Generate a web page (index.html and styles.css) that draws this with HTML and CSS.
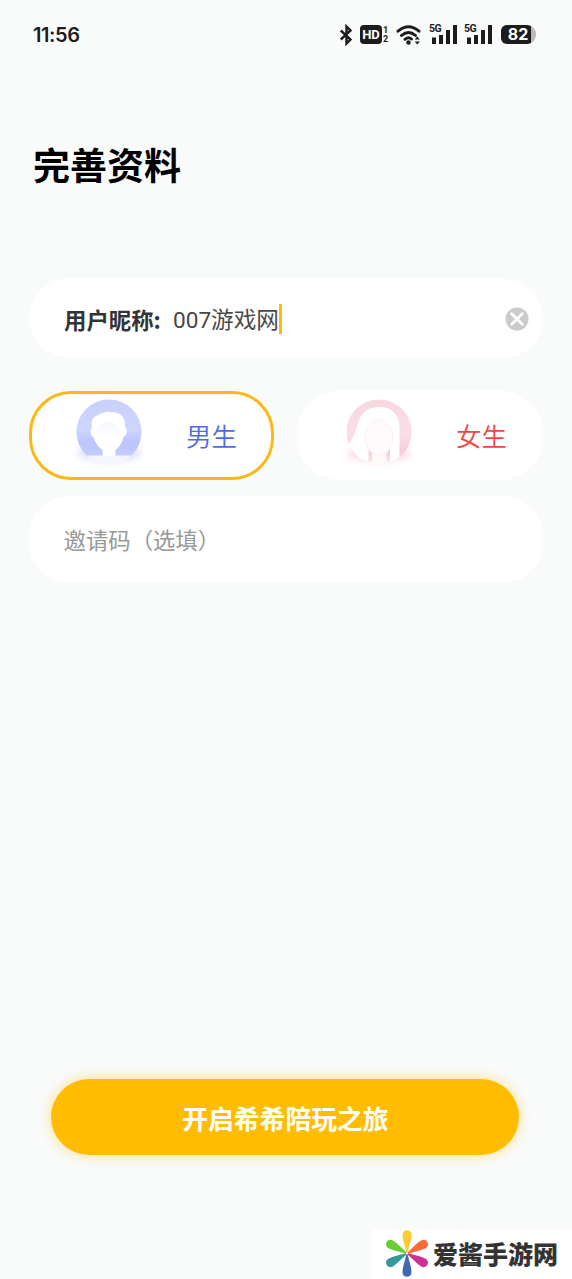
FILE: index.html
```html
<!DOCTYPE html>
<html lang="zh-CN">
<head>
<meta charset="utf-8">
<title>完善资料</title>
<link rel="stylesheet" href="styles.css">
</head>
<body>
<div class="screen">
  <header class="status">
    <span class="time">11:56</span>
    <div class="status-icons">
      <svg class="bluetooth" width="14" height="22" viewBox="0 0 14 22"><path d="M1.800 6.500 11.500 15.500 7.500 19.500V2.500l4 4L1.800 15.500" fill="none" stroke="#1c1c1c" stroke-width="2.400"/></svg>
      <span class="hd">HD</span>
      <span class="sim"><span>1</span><span>2</span></span>
      <svg class="wifi" width="26" height="22" viewBox="0 0 26 22"><g fill="none" stroke="#1c1c1c" stroke-width="2.900" stroke-linecap="round"><path d="M2 7.200Q12.500-1.500 23 7.200M5.500 11.500Q12.500 5.500 19.500 11.500M9 15.300Q12.500 12.500 15.500 15"/></g><circle cx="12.500" cy="18.500" r="2.200" fill="#1c1c1c"/><path d="M18.700 15.500 21.300 12.500l2.600 3zM18.700 17.500h5.200l-2.600 3z" fill="#1c1c1c"/></svg>
      <span class="signal"><span class="gen">5G</span><svg width="28" height="21" viewBox="0 0 28 21"><path d="M3 13.500h4V20H3zM10 11h4v9h-4zM17 6h4v14h-4zM24 1h4v19h-4z" fill="#1c1c1c"/></svg></span>
      <span class="signal"><span class="gen">5G</span><svg width="28" height="21" viewBox="0 0 28 21"><path d="M3 13.500h4V20H3zM10 11h4v9h-4zM17 6h4v14h-4zM24 1h4v19h-4z" fill="#1c1c1c"/></svg></span>
      <span class="battery"><span class="charge">82</span></span>
    </div>
  </header>

  <main class="form">
    <h1 class="title">完善资料</h1>
    <div class="field nickname">
      <span class="label">用户昵称:</span>
      <span class="value">007游戏网</span>
      <span class="caret"></span>
      <svg class="clear" width="24" height="24" viewBox="0 0 24 24"><circle cx="12" cy="12" r="11.500" fill="#cbcbcb"/><path d="m6.700 6.700 10.600 10.600M17.300 6.700 6.700 17.300" stroke="#fff" stroke-width="2.700" stroke-linecap="round"/></svg>
    </div>
    <div class="genders">
      <div class="gender male">
        <svg class="avatar" width="80" height="80" viewBox="0 0 80 80">
          <defs>
            <linearGradient id="blue" x1="0" y1="0" x2="0" y2="1"><stop offset="0" stop-color="#c6cefa"/><stop offset=".58" stop-color="#cfd6fd"/><stop offset=".8" stop-color="#bbc5fd"/><stop offset="1" stop-color="#c4ccfd"/></linearGradient>
            <linearGradient id="blueface" x1="0" y1="0" x2="0" y2="1"><stop offset="0" stop-color="#f5f6ff"/><stop offset=".5" stop-color="#fff"/></linearGradient>
            <clipPath id="disc"><circle cx="40" cy="40" r="32.500"/></clipPath>
            <filter id="soft" x="-20%" y="-50%" width="140%" height="200%"><feGaussianBlur stdDeviation="3"/></filter>
          </defs>
          <ellipse cx="40" cy="61" rx="32" ry="9" fill="#e0e4fe" filter="url(#soft)"/>
          <g clip-path="url(#disc)"><path d="M0 0h80v80H0z" fill="#f4f6ff"/><path d="M0 0h80v63.500H0z" fill="url(#blue)"/><path d="M33 52h14v4l-.5 2v6h-13v-6l-.5-2z" fill="#fff"/></g>
          <path d="M24.500 45c-3-1-4-7-1.500-9-1-6 0-10 4-12 2 0 3-3 7-3 3-2 6-1 9-1 8 0 14 5 13 15 3 2 2 9-1.500 10-2 9-8.500 15-14.500 15S27 54 24.500 45Z" fill="#fff"/>
          <path d="M27 39c0-4 3-4 5-7 5-3 15-3 20 6v7c-2 8-7 14-12 14S28 53 27 44Z" fill="url(#blueface)"/>
        </svg>
        <span class="gender-name">男生</span>
      </div>
      <div class="gender female">
        <svg class="avatar" width="80" height="80" viewBox="0 0 80 80">
          <defs>
            <linearGradient id="pink" x1="0" y1="0" x2="0" y2="1"><stop offset="0" stop-color="#f8d6df"/><stop offset=".55" stop-color="#fbdfe6"/><stop offset=".75" stop-color="#f7c9d6"/><stop offset="1" stop-color="#fdeaf0"/></linearGradient>
            <linearGradient id="neck" x1="0" y1="0" x2="0" y2="1"><stop offset="0" stop-color="#f1bac7"/><stop offset="1" stop-color="#fce6eb"/></linearGradient>
          </defs>
          <ellipse cx="40" cy="62" rx="32" ry="8" fill="#fcdfe7" filter="url(#soft)"/>
          <g clip-path="url(#disc)"><path d="M0 0h80v80H0z" fill="url(#pink)"/><path d="M7 54c8-6 10-17 13-26 4-9 10-13 21-13 12 0 19 8 19.500 19v32l-8 7H24L8 60Z" fill="#fff"/><path d="M29.500 53h21.500v17H29.500z" fill="url(#neck)"/><path d="M33 53h14.500v20H33z" fill="#fff9fa"/></g>
          <path d="M26 45c0-8 3-13 8-15 3-1 4-3 7-4 1 3 4 3 5 6 5 1 8 6 8 13 0 10-6 18-14 18S26 55 26 45Z" fill="#fffbfc" stroke="#fdf0f3"/>
        </svg>
        <span class="gender-name">女生</span>
      </div>
    </div>
    <div class="field invite">邀请码（选填）</div>
    <button class="submit">开启希希陪玩之旅</button>
  </main>

  <footer class="brand">
    <svg width="44" height="50" viewBox="0 0 44 50">
      <defs><path id="petal" d="M21.300 23.500C20 17 17.500 11 17.500 5.800 17.500-.3 26.500-.3 26.500 5.800 26.500 11 24 17 22.700 23.500Z"/></defs>
      <use href="#petal" fill="#ffcd32"/>
      <use href="#petal" fill="#ff6a35" transform="rotate(61 22 24.500)"/>
      <use href="#petal" fill="#ce3196" transform="rotate(119 22 24.500)"/>
      <use href="#petal" fill="#4268b3" transform="rotate(180 22 24.500)"/>
      <use href="#petal" fill="#35999b" transform="rotate(241 22 24.500)"/>
      <use href="#petal" fill="#69cc35" transform="rotate(299 22 24.500)"/>
    </svg>
    <span class="brand-name">爱酱手游网</span>
  </footer>
</div>
</body>
</html>
```
FILE: styles.css
```css
* { box-sizing: border-box; }
body { margin: 0; font-family: Roboto, "Noto Sans CJK SC", sans-serif; background: #f9fbfb; }
svg { display: block; flex: none; }
.screen { width: 572px; height: 1279px; display: flex; flex-direction: column; background: #f9fbfb; overflow: hidden; }

.status { height: 69px; padding: 0 36px 0 33px; display: flex; align-items: center; justify-content: space-between; color: #1c1c1c; }
.time { font: 600 20px/24px Inter, sans-serif; letter-spacing: -.4px; }
.status-icons { display: flex; align-items: center; }
.hd { width: 22px; height: 19px; margin-left: 7px; border-radius: 4px; background: #1c1c1c; color: #fff; font: 700 13px/20px Roboto, sans-serif; text-align: center; }
.sim { width: 6px; margin-left: 1px; display: flex; flex-direction: column; font: 700 9px/9px Roboto, sans-serif; }
.wifi { margin-left: 7px; }
.signal { position: relative; width: 28px; margin-left: 7px; }
.gen { position: absolute; left: 0; top: 0; font: 700 10.500px/10px Roboto, sans-serif; letter-spacing: -.4px; }
.battery { width: 35px; height: 19px; margin-left: 9px; border-radius: 6px 9px 9px 6px; background: #b9bbbb; overflow: hidden; }
.charge { display: block; width: 30px; height: 19px; padding-left: 4px; background: #1c1c1c; color: #fff; font: 700 16px/19px Inter, sans-serif; text-align: center; }

.form { flex: none; display: flex; flex-direction: column; padding: 0 29px; }
.title { margin: 68px 0 0 4px; height: 54px; font: 700 37px/54px "Noto Sans CJK SC", sans-serif; color: #000; }
.field { display: flex; align-items: center; padding: 0 14px 0 35px; background: #fff; border-radius: 40px; }
.nickname { height: 79px; margin-top: 88px; font-size: 22px; color: #444; }
.label { width: 109px; font-family: "Noto Sans CJK SC", sans-serif; font-size: 22.400px; font-weight: 700; color: #333; }
.value { padding-bottom: 1px; font-size: 22.600px; font-weight: 400; white-space: nowrap; color: #484848; }
.caret { width: 3px; height: 30px; background: #ffbc00; }
.clear { margin-left: auto; }
.genders { display: flex; gap: 23px; margin-top: 33px; }
.gender { height: 89px; border-radius: 42px; background: #fff; display: flex; align-items: center; font: 400 25.500px/36px "Noto Sans CJK SC", sans-serif; }
.male { width: 245px; border: 3px solid #fbb917; padding: 0 34px 7px 37px; color: #5069ee; }
.female { width: 246px; padding: 0 36px 7px 42px; color: #f64545; }
.gender-name { margin-left: auto; padding-top: 5px; font-weight: 350; }
.invite { height: 87px; margin-top: 16px; padding-bottom: 2px; padding-left: 34.500px; font: 400 22.400px/34px "Noto Sans CJK SC", sans-serif; color: #999; }
.submit { width: 468px; height: 76px; margin: 496px auto 0 22.400px; padding: 2px 0 0; border: 0; border-radius: 38px; background: #ffbc00; box-shadow: 0 0 14px rgba(255, 188, 0, .46); color: #fff; font: 700 25.800px/38px "Noto Sans CJK SC", sans-serif; }

.brand { align-self: flex-end; width: 200px; height: 50px; margin-top: auto; padding-left: 13px; display: flex; align-items: center; background: #fff; }
.brand-name { margin: -3px 0 0 4px; font: 900 25px/38px "Noto Sans CJK SC", sans-serif; color: #333; white-space: nowrap; }
```
